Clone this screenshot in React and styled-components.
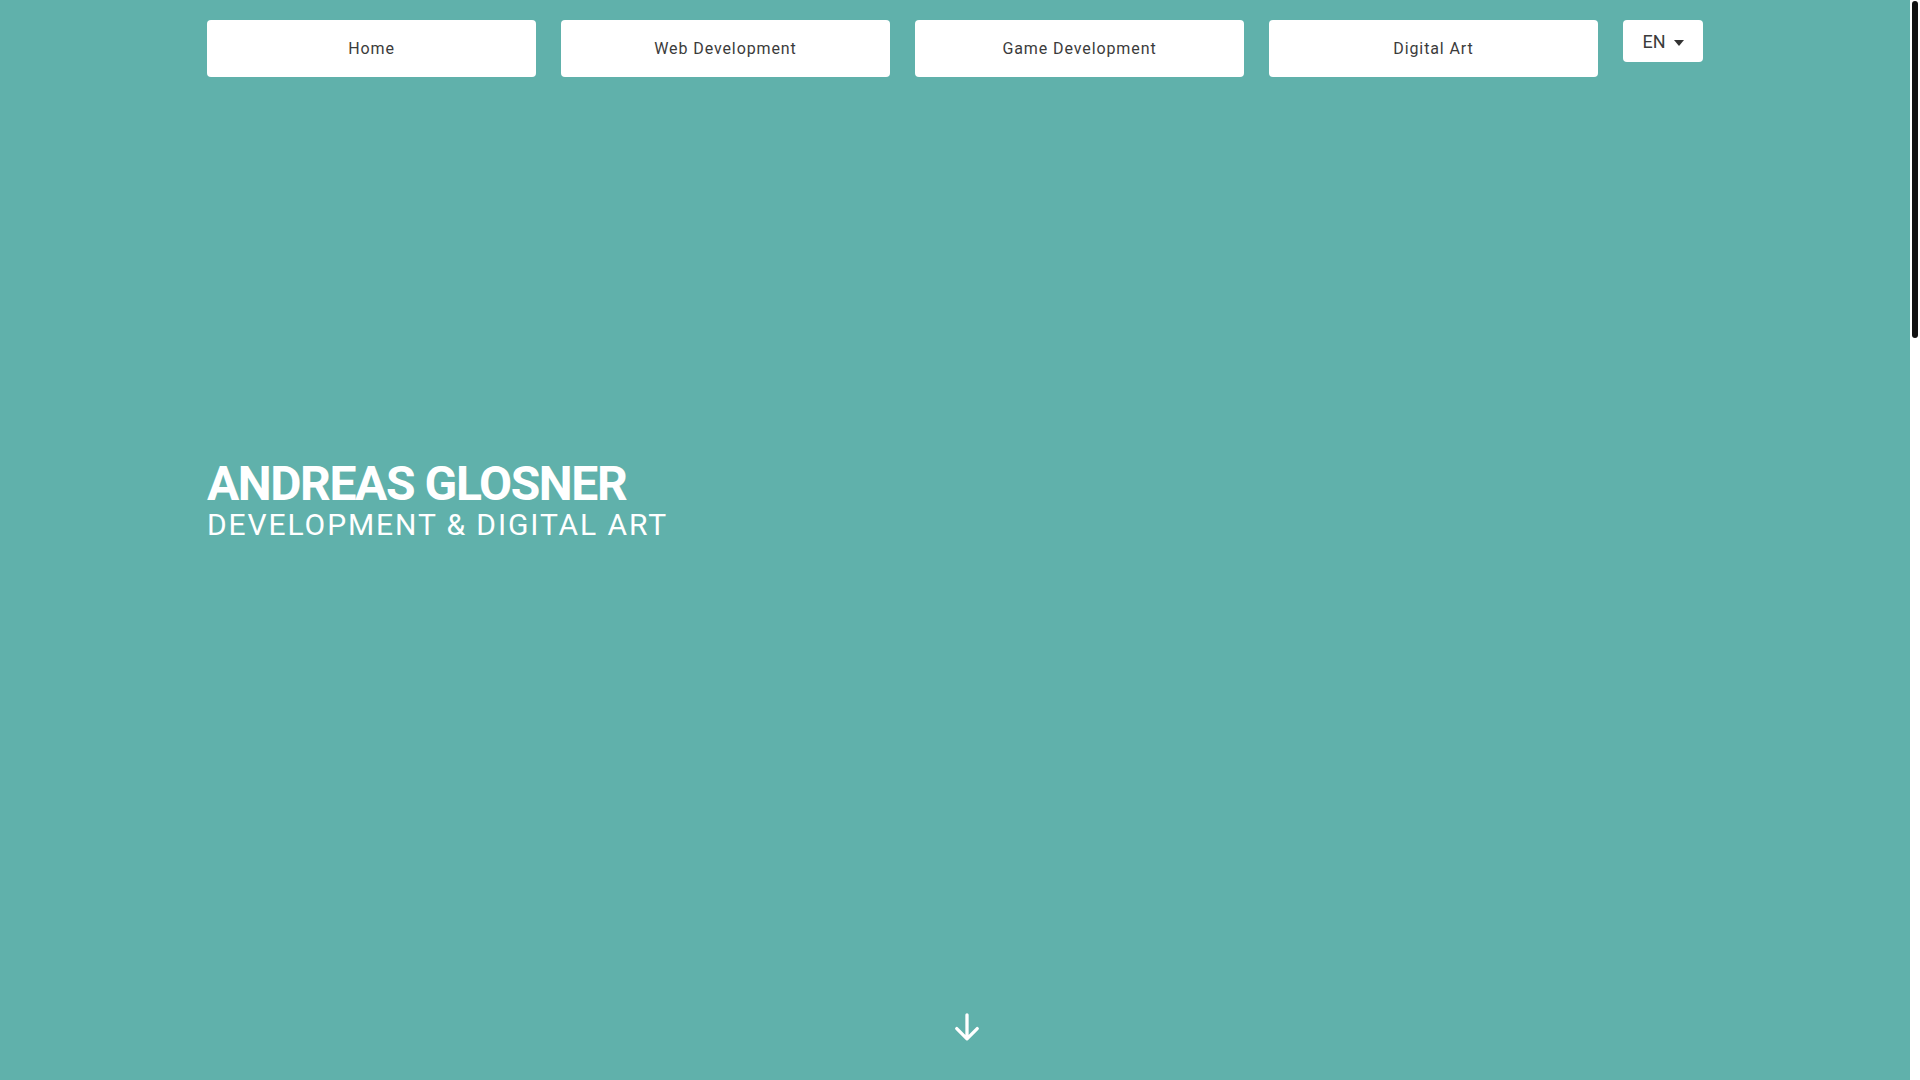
import React from "react";
import styled, { createGlobalStyle } from "styled-components";

const GlobalStyle = createGlobalStyle`
  html, body {
    margin: 0;
    padding: 0;
    background: #60b1ab;
    font-family: Roboto, "Liberation Sans", Arial, sans-serif;
  }
  * { box-sizing: border-box; }
`;

const Page = styled.div`
  padding-right: 10px;
  background: #60b1ab;
`;

const ScrollTrack = styled.div`
  position: fixed;
  top: 0;
  right: 0;
  width: 10px;
  height: 100vh;
  background: #ffffff;
  z-index: 10;
`;

const ScrollThumb = styled.div`
  margin: 1px 0 0 2px;
  width: 6px;
  height: 337px;
  border-radius: 3px;
  background: #111111;
`;

const Hero = styled.section`
  position: relative;
  height: 100vh;
  background: #60b1ab;
`;

const Nav = styled.nav`
  width: 1496px;
  margin: 0 auto;
  padding-top: 20px;
  display: flex;
  align-items: flex-start;
  gap: 25px;
`;

const NavButton = styled.a`
  flex: 0 0 329px;
  height: 57px;
  background: #ffffff;
  border-radius: 4px;
  display: flex;
  align-items: center;
  justify-content: center;
  font-size: 16px;
  letter-spacing: 0.9px;
  color: #3b3b3b;
  text-decoration: none;
  cursor: pointer;
`;

const LangButton = styled.button`
  flex: 0 0 80px;
  height: 42px;
  background: #ffffff;
  border: none;
  border-radius: 4px;
  display: flex;
  align-items: center;
  justify-content: center;
  gap: 8px;
  padding: 0;
  font-family: Roboto, "Liberation Sans", Arial, sans-serif;
  font-size: 18px;
  color: #3b3b3b;
  cursor: pointer;
`;

const Caret = styled.span`
  width: 0;
  height: 0;
  border-left: 5px solid transparent;
  border-right: 5px solid transparent;
  border-top: 6px solid #333333;
  margin-top: 3px;
`;

const Intro = styled.div`
  width: 1496px;
  margin: 0 auto;
  padding-top: 381px;
  color: #ffffff;
`;

const Title = styled.h1`
  margin: 0;
  font-size: 48px;
  font-weight: 700;
  line-height: 52px;
  letter-spacing: -1.4px;
`;

const Subtitle = styled.h2`
  margin: 0;
  font-size: 30px;
  font-weight: 400;
  line-height: 30px;
  letter-spacing: 1.9px;
`;

const ScrollArrow = styled.a`
  position: absolute;
  left: 50%;
  bottom: 39px;
  width: 24px;
  height: 28px;
  display: block;
  cursor: pointer;
`;

const Below = styled.section`
  height: 2380px;
  background: #60b1ab;
`;

export default function App() {
  const links = ["Home", "Web Development", "Game Development", "Digital Art"];
  return (
    <Page>
      <GlobalStyle />
      <Hero>
        <Nav>
          {links.map((l) => (
            <NavButton key={l}>{l}</NavButton>
          ))}
          <LangButton>
            EN
            <Caret />
          </LangButton>
        </Nav>
        <Intro>
          <Title>ANDREAS GLOSNER</Title>
          <Subtitle>DEVELOPMENT &amp; DIGITAL ART</Subtitle>
        </Intro>
        <ScrollArrow>
          <svg width="24" height="28" viewBox="0 0 24 28" fill="none">
            <path
              d="M12 1.8V25.8M1.8 15.6L12 25.8L22.2 15.6"
              stroke="#ffffff"
              strokeWidth="3.3"
              strokeLinecap="round"
              strokeLinejoin="round"
            />
          </svg>
        </ScrollArrow>
      </Hero>
      <Below />
      <ScrollTrack>
        <ScrollThumb />
      </ScrollTrack>
    </Page>
  );
}
